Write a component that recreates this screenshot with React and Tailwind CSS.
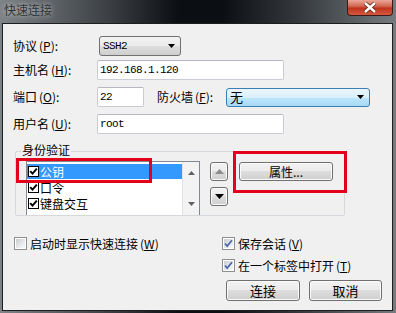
import React from 'react';

function Acc({ k }) {
  return (
    <span className="ml-[2px]">
      (<span className="underline underline-offset-1">{k}</span>)
    </span>
  );
}

function Arrow({ up, color = '#000' }) {
  return (
    <svg width="7" height="4" viewBox="0 0 7 4">
      <path d={up ? 'M3.5 0L7 4H0z' : 'M0 0h7L3.5 4z'} fill={color} />
    </svg>
  );
}

function WinCheck({ checked }) {
  return (
    <span className="flex w-[13px] h-[13px] shrink-0 border border-[#8e8f8f] bg-white p-[1px]">
      <span className="flex flex-1 items-center justify-center bg-[linear-gradient(135deg,#c9ccd1,#eeeff1_70%,#f7f7f7)]">
        {checked && (
          <svg width="9" height="9" viewBox="0 0 9 9">
            <path d="M1 4.5l2.2 2.5L8 1.2" fill="none" stroke="#4b6aa8" strokeWidth="1.8" />
          </svg>
        )}
      </span>
    </span>
  );
}

function ListCheck() {
  return (
    <span className="flex w-[11px] h-[11px] shrink-0 items-center justify-center border border-black bg-white">
      <svg width="9" height="9" viewBox="0 0 9 9">
        <path d="M1.2 4.2l2.3 2.4L7.8 1.6" fill="none" stroke="#000" strokeWidth="1.9" />
      </svg>
    </span>
  );
}

function Btn({ children, className = '' }) {
  return (
    <button className={`flex items-center justify-center rounded-[3px] border border-[#707070] bg-[linear-gradient(#f2f2f2,#ebebeb_50%,#dddddd_50%,#cfcfcf)] shadow-[inset_0_0_0_1px_#fbfbfb] text-[12px] text-black ${className}`}>
      {children}
    </button>
  );
}

function Field({ value, className = '' }) {
  return (
    <div className={`flex h-[20px] items-center rounded-[2px] border border-[#c9ccd2] border-t-[#b5b8bf] bg-white pl-[2px] font-['Liberation_Mono',monospace] text-[11px] tracking-[-0.6px] text-black ${className}`}>
      {value}
    </div>
  );
}

export default function App() {
  return (
    <div className="relative flex h-[313px] w-[396px] flex-col overflow-hidden bg-[linear-gradient(to_right,#7e8387,#3a3e42_28%,#0b0e13_45%,#0b0e13_56%,#34383c_75%,#767b7f)] font-['Noto_Sans_CJK_SC',sans-serif] text-[12px] leading-[14px] text-black">
      {/* title bar */}
      <div className="flex h-[23px] items-start justify-between">
        <span className="ml-[4px] mt-[3px] text-[12px] leading-[14px] text-[#2f3338] [text-shadow:0_0_5px_rgba(255,255,255,0.7)]">
          快速连接
        </span>
        <div className="mr-[3px] flex h-[16px] w-[46px] items-center justify-center rounded-b-[4px] border border-t-0 border-[#3d1a16] bg-[linear-gradient(#eaa797,#d36a55_40%,#c0321c_55%,#d45a40)]">
          <svg width="14" height="11" viewBox="0 0 14 11">
            <path d="M2 1l10 9M12 1L2 10" stroke="#5a2018" strokeWidth="4" />
            <path d="M2 1l10 9M12 1L2 10" stroke="#fff" strokeWidth="2.4" />
          </svg>
        </div>
      </div>

      {/* dialog body */}
      <div className="ml-[2px] h-[288px] w-[391px] border border-[#1e1e1e] bg-[#f0f0f0] pl-[10px] pt-[12px]">
        <div className="flex h-[20px] items-center">
          <span className="w-[84px]">协议<Acc k="P" />:</span>
          <div className="ml-[2px] flex h-[20px] w-[82px] items-center justify-between rounded-[3px] border border-[#707070] bg-[linear-gradient(#f2f2f2,#ebebeb_50%,#dddddd_50%,#cfcfcf)] pl-[3px] pr-[5px] font-['Liberation_Mono',monospace] text-[11px] tracking-[-0.6px]">
            SSH2
            <Arrow />
          </div>
        </div>
        <div className="mt-[4px] flex h-[20px] items-center">
          <span className="w-[84px]">主机名<Acc k="H" />:</span>
          <Field value="192.168.1.120" className="w-[187px]" />
        </div>
        <div className="mt-[7px] flex h-[20px] items-center">
          <span className="w-[84px]">端口<Acc k="O" />:</span>
          <Field value="22" className="w-[47px]" />
          <span className="ml-[13px] w-[69px]">防火墙<Acc k="F" />:</span>
          <div className="flex h-[19px] w-[144px] items-center justify-between rounded-[3px] border border-[#3c7fb1] bg-[linear-gradient(#eaf6fd,#d9f0fc_50%,#bee6fd_50%,#a7d9f5)] pl-[3px] pr-[5px] text-[13px]">
            无
            <Arrow />
          </div>
        </div>
        <div className="mt-[7px] flex h-[20px] items-center">
          <span className="w-[84px]">用户名<Acc k="U" />:</span>
          <Field value="root" className="w-[187px]" />
        </div>

        {/* group box */}
        <div className="relative ml-[2px] mt-[17px] h-[65px] w-[330px] rounded-[2px] border border-[#d5d9dd] pl-[10px] pt-[9px]">
          <span className="absolute -top-[9px] left-[5px] bg-[#f0f0f0] px-[1px]">身份验证</span>
          <div className="flex items-start">
            <div className="flex h-[54px] w-[174px] overflow-hidden border border-b-0 border-[#828790] bg-white">
              <div className="flex-1 pt-[2px] text-[12px] leading-[14px]">
                <div className="flex h-[15px] items-center gap-[1px] bg-[#3399ff] pl-[1px] text-white">
                  <ListCheck />
                  <span>公钥</span>
                </div>
                <div className="mt-[1px] flex h-[15px] items-center gap-[1px] pl-[1px]">
                  <ListCheck />
                  <span>口令</span>
                </div>
                <div className="mt-[1px] flex h-[15px] items-center gap-[1px] pl-[1px]">
                  <ListCheck />
                  <span>键盘交互</span>
                </div>
              </div>
              <div className="flex w-[17px] flex-col items-center justify-between border-l border-[#e3e3e3] bg-[#f3f3f3] pb-[9px] pt-[9px]">
                <Arrow up color="#606060" />
                <Arrow color="#606060" />
              </div>
            </div>
            <div className="ml-[10px] mt-[1px] flex flex-col gap-[6px]">
              <Btn className="h-[19px] w-[18px]">
                <svg width="9" height="5" viewBox="0 0 9 5">
                  <path d="M4.5 0L9 5H0z" fill="#8c8c8c" />
                </svg>
              </Btn>
              <Btn className="h-[19px] w-[18px]">
                <svg width="9" height="5" viewBox="0 0 9 5">
                  <path d="M0 0h9L4.5 5z" fill="#000" />
                </svg>
              </Btn>
            </div>
            <Btn className="ml-[11px] mt-[1px] h-[19px] w-[94px]">属性...</Btn>
          </div>
        </div>

        {/* bottom options */}
        <div className="mt-[21px] flex">
          <div className="ml-[1px] flex h-[13px] w-[208px] items-center gap-[3px]">
            <WinCheck />
            <span>启动时显示快速连接<Acc k="W" /></span>
          </div>
          <div className="flex flex-col">
            <div className="flex h-[13px] items-center gap-[3px]">
              <WinCheck checked />
              <span>保存会话<Acc k="V" /></span>
            </div>
            <div className="mt-[9px] flex h-[13px] items-center gap-[3px]">
              <WinCheck checked />
              <span>在一个标签中打开<Acc k="T" /></span>
            </div>
            <div className="ml-[4px] mt-[8px] flex gap-[9px]">
              <Btn className="h-[21px] w-[74px] text-[13px]">连接</Btn>
              <Btn className="h-[21px] w-[73px] text-[13px]">取消</Btn>
            </div>
          </div>
        </div>
      </div>

      {/* red highlight marks */}
      <div className="absolute left-[16px] top-[158px] h-[25px] w-[136px] border-[3px] border-[#e3001b]" />
      <div className="absolute left-[233px] top-[151px] h-[42px] w-[114px] border-[3px] border-[#e3001b]" />
    </div>
  );
}
